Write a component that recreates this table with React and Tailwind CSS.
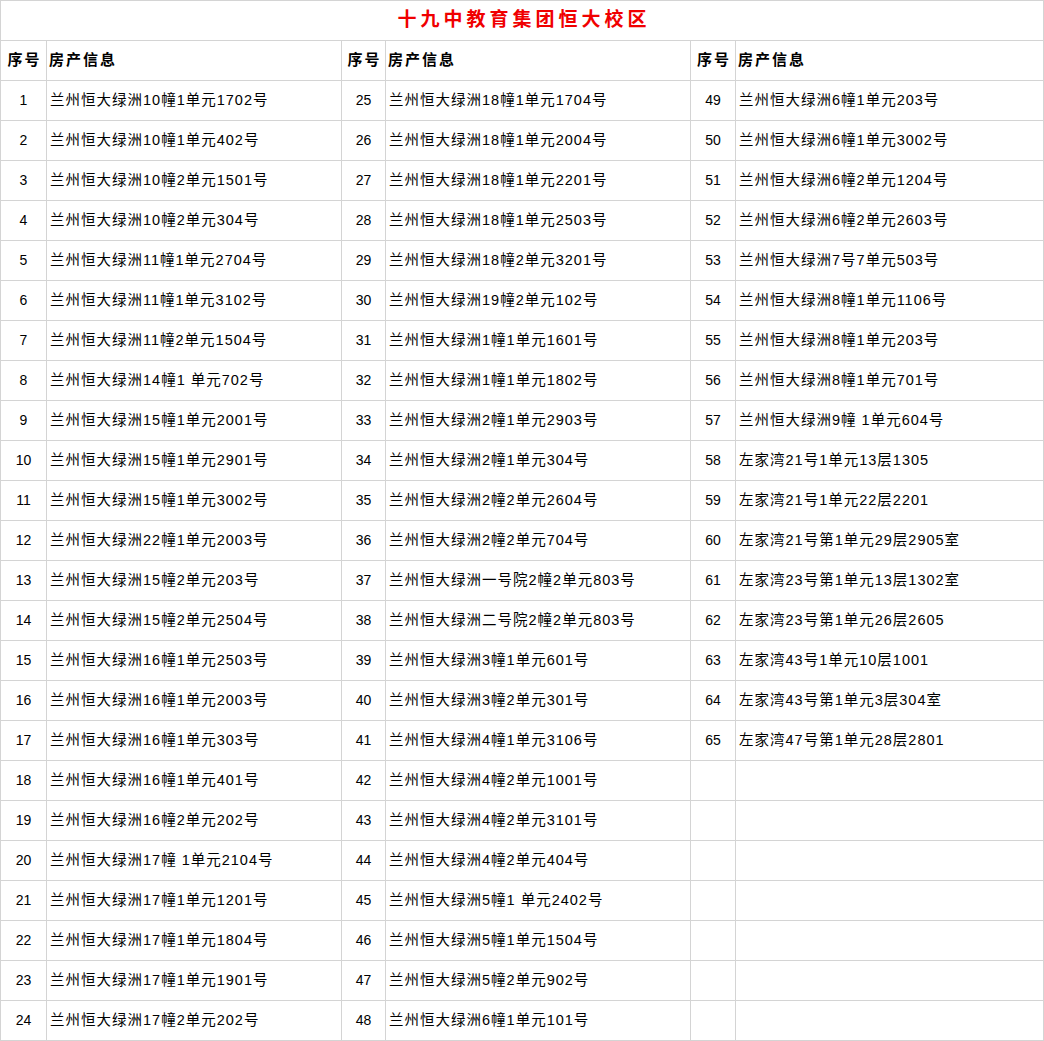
const col1 = [
  "兰州恒大绿洲10幢1单元1702号",
  "兰州恒大绿洲10幢1单元402号",
  "兰州恒大绿洲10幢2单元1501号",
  "兰州恒大绿洲10幢2单元304号",
  "兰州恒大绿洲11幢1单元2704号",
  "兰州恒大绿洲11幢1单元3102号",
  "兰州恒大绿洲11幢2单元1504号",
  "兰州恒大绿洲14幢1 单元702号",
  "兰州恒大绿洲15幢1单元2001号",
  "兰州恒大绿洲15幢1单元2901号",
  "兰州恒大绿洲15幢1单元3002号",
  "兰州恒大绿洲22幢1单元2003号",
  "兰州恒大绿洲15幢2单元203号",
  "兰州恒大绿洲15幢2单元2504号",
  "兰州恒大绿洲16幢1单元2503号",
  "兰州恒大绿洲16幢1单元2003号",
  "兰州恒大绿洲16幢1单元303号",
  "兰州恒大绿洲16幢1单元401号",
  "兰州恒大绿洲16幢2单元202号",
  "兰州恒大绿洲17幢 1单元2104号",
  "兰州恒大绿洲17幢1单元1201号",
  "兰州恒大绿洲17幢1单元1804号",
  "兰州恒大绿洲17幢1单元1901号",
  "兰州恒大绿洲17幢2单元202号",
];

const col2 = [
  "兰州恒大绿洲18幢1单元1704号",
  "兰州恒大绿洲18幢1单元2004号",
  "兰州恒大绿洲18幢1单元2201号",
  "兰州恒大绿洲18幢1单元2503号",
  "兰州恒大绿洲18幢2单元3201号",
  "兰州恒大绿洲19幢2单元102号",
  "兰州恒大绿洲1幢1单元1601号",
  "兰州恒大绿洲1幢1单元1802号",
  "兰州恒大绿洲2幢1单元2903号",
  "兰州恒大绿洲2幢1单元304号",
  "兰州恒大绿洲2幢2单元2604号",
  "兰州恒大绿洲2幢2单元704号",
  "兰州恒大绿洲一号院2幢2单元803号",
  "兰州恒大绿洲二号院2幢2单元803号",
  "兰州恒大绿洲3幢1单元601号",
  "兰州恒大绿洲3幢2单元301号",
  "兰州恒大绿洲4幢1单元3106号",
  "兰州恒大绿洲4幢2单元1001号",
  "兰州恒大绿洲4幢2单元3101号",
  "兰州恒大绿洲4幢2单元404号",
  "兰州恒大绿洲5幢1 单元2402号",
  "兰州恒大绿洲5幢1单元1504号",
  "兰州恒大绿洲5幢2单元902号",
  "兰州恒大绿洲6幢1单元101号",
];

const col3 = [
  "兰州恒大绿洲6幢1单元203号",
  "兰州恒大绿洲6幢1单元3002号",
  "兰州恒大绿洲6幢2单元1204号",
  "兰州恒大绿洲6幢2单元2603号",
  "兰州恒大绿洲7号7单元503号",
  "兰州恒大绿洲8幢1单元1106号",
  "兰州恒大绿洲8幢1单元203号",
  "兰州恒大绿洲8幢1单元701号",
  "兰州恒大绿洲9幢 1单元604号",
  "左家湾21号1单元13层1305",
  "左家湾21号1单元22层2201",
  "左家湾21号第1单元29层2905室",
  "左家湾23号第1单元13层1302室",
  "左家湾23号第1单元26层2605",
  "左家湾43号1单元10层1001",
  "左家湾43号第1单元3层304室",
  "左家湾47号第1单元28层2801",
];

const font = { fontFamily: '"Liberation Sans", "Noto Sans CJK SC", sans-serif' };

function NumCell({ n }) {
  return (
    <div className="h-10 border-r border-b border-[#d4d4d4] flex items-center justify-center text-[14px] text-black">
      {n}
    </div>
  );
}

function InfoCell({ text }) {
  return (
    <div className="h-10 border-r border-b border-[#d4d4d4] flex items-center pl-[3px] text-[14.5px] tracking-[1px] text-black whitespace-pre overflow-hidden">
      {text}
    </div>
  );
}

function HeadCell({ children, center }) {
  return (
    <div
      className={
        "h-10 border-r border-b border-[#d4d4d4] flex items-center text-[15px] font-bold tracking-[2px] text-black " +
        (center ? "justify-center pl-[2px]" : "pl-[2px]")
      }
    >
      {children}
    </div>
  );
}

export default function App() {
  const rows = [];
  for (let i = 0; i < 24; i++) {
    rows.push(
      <NumCell key={"a" + i} n={i + 1} />,
      <InfoCell key={"b" + i} text={col1[i]} />,
      <NumCell key={"c" + i} n={i + 25} />,
      <InfoCell key={"d" + i} text={col2[i]} />,
      <NumCell key={"e" + i} n={col3[i] ? i + 49 : ""} />,
      <InfoCell key={"f" + i} text={col3[i] || ""} />
    );
  }

  return (
    <div className="bg-white w-[1044px]" style={font}>
      <div className="border-l border-t border-[#d4d4d4] grid grid-cols-[46px_295px_44px_305px_45px_308px]">
        <div className="col-span-6 h-10 border-r border-b border-[#d4d4d4] flex items-center justify-center">
          <span className="text-[19px] font-semibold text-[#f00000] tracking-[4px] pl-[4px]">
            十九中教育集团恒大校区
          </span>
        </div>
        <HeadCell center>序号</HeadCell>
        <HeadCell>房产信息</HeadCell>
        <HeadCell center>序号</HeadCell>
        <HeadCell>房产信息</HeadCell>
        <HeadCell center>序号</HeadCell>
        <HeadCell>房产信息</HeadCell>
        {rows}
      </div>
    </div>
  );
}
